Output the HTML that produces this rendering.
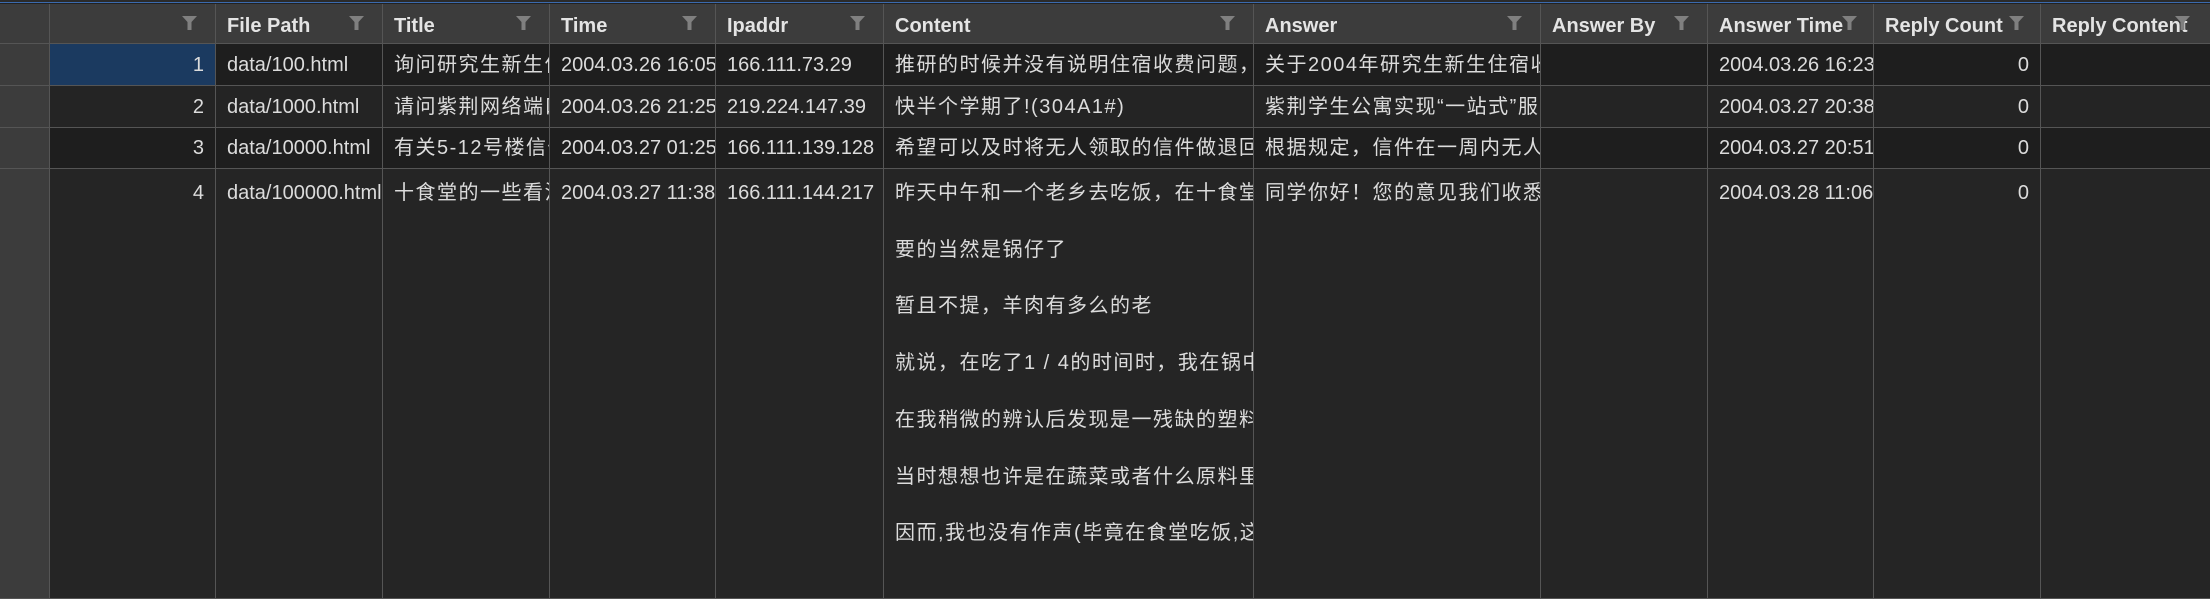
<!DOCTYPE html>
<html><head><meta charset="utf-8"><style>
*{margin:0;padding:0;box-sizing:border-box}
body{width:2210px;height:599px;overflow:hidden;background:#252525;position:relative;font-family:"Liberation Sans","Noto Sans CJK SC",sans-serif;color:#dcdcdc}
.top{position:absolute;left:0;top:0;width:2210px;height:4px;background:#2b2b2b;border-bottom:1px solid #222}
.top:after{content:"";position:absolute;left:0;top:2px;width:2210px;height:1px;background:#3b6aae}
.c{position:absolute;border-right:1px solid #555;border-bottom:1px solid #555;overflow:hidden;white-space:nowrap;font-size:20px}
.h{background:#3c3c3c;font-weight:bold;font-size:20px;color:#e4e4e4;padding-left:11px;line-height:40px;padding-top:2px}
.t{padding-left:11px}
.cj{letter-spacing:1.5px}
.r{text-align:right;padding-right:11px}
.f{position:absolute;top:12px;display:block}
.f svg{display:block}
</style></head><body>
<div class="top"></div>
<div id="g"></div>
<script>
var E=[0,50,216,383,550,716,884,1254,1541,1708,1874,2041,2260];
var R=[[4,44],[44,86],[86,128],[128,169],[169,599]];
var bg=["#3c3c3c","#1e1e1e","#242424","#1e1e1e","#252525"];
var H=["","","File Path","Title","Time","Ipaddr","Content","Answer","Answer By","Answer Time","Reply Count","Reply Content"];
var FO=[0,19,19,19,19,19,19,19,19,17,17,0];
var D=[
["1","data/100.html","询问研究生新生住宿收费","2004.03.26 16:05","166.111.73.29","推研的时候并没有说明住宿收费问题，","关于2004年研究生新生住宿收费","","2004.03.26 16:23","0",""],
["2","data/1000.html","请问紫荆网络端口","2004.03.26 21:25","219.224.147.39","快半个学期了!(304A1#)","紫荆学生公寓实现“一站式”服务","","2004.03.27 20:38","0",""],
["3","data/10000.html","有关5-12号楼信件","2004.03.27 01:25","166.111.139.128","希望可以及时将无人领取的信件做退回","根据规定，信件在一周内无人领取","","2004.03.27 20:51","0",""],
["4","data/100000.html","十食堂的一些看法","2004.03.27 11:38","166.111.144.217","昨天中午和一个老乡去吃饭，在十食堂<br>要的当然是锅仔了<br>暂且不提，羊肉有多么的老<br>就说，在吃了1 / 4的时间时，我在锅中<br>在我稍微的辨认后发现是一残缺的塑料<br>当时想想也许是在蔬菜或者什么原料里<br>因而,我也没有作声(毕竟在食堂吃饭,这","同学你好！您的意见我们收悉","","2004.03.28 11:06","0",""]];
var funnel='<svg width="15" height="15" viewBox="0 0 15 15"><path d="M0 0H15L9.5 6V14H5.5V6Z" fill="#808080"/></svg>';
var s="";
for(var ri=0;ri<R.length;ri++){
 var y0=R[ri][0],y1=R[ri][1];
 for(var ci=0;ci<12;ci++){
  var x0=E[ci],x1=E[ci+1];
  var st='left:'+x0+'px;top:'+y0+'px;width:'+(x1-x0)+'px;height:'+(y1-y0)+'px;';
  if(ri==0){
   s+='<div class="c h" style="'+st+'">'+H[ci]+(FO[ci]?'<span class="f" style="left:'+(x1-x0-FO[ci]-15)+'px">'+funnel+'</span>':'')+'</div>';
  } else {
   var b=ci==0?"#3c3c3c":bg[ri];
   if(ri==1&&ci==1)b="#1b3a60";
   var txt=ci==0?"":D[ri-1][ci-1];
   var right=(ci==1||ci==10);
   var cj=(ci==3||ci==6||ci==7)?' cj':'';
   var lh=ri==4?'line-height:56.7px;':'line-height:'+(y1-y0)+'px;';
   var inner=ri==4?'<div style="margin-top:-4px">'+txt+'</div>':txt;
   s+='<div class="c '+(right?'r':'t')+cj+'" style="'+st+'background:'+b+';'+lh+'">'+inner+'</div>';
  }
 }
}
s+='<span class="f" style="position:absolute;left:2175px;top:16px">'+funnel+'</span>';
document.getElementById('g').innerHTML=s;
</script>
</body></html>
